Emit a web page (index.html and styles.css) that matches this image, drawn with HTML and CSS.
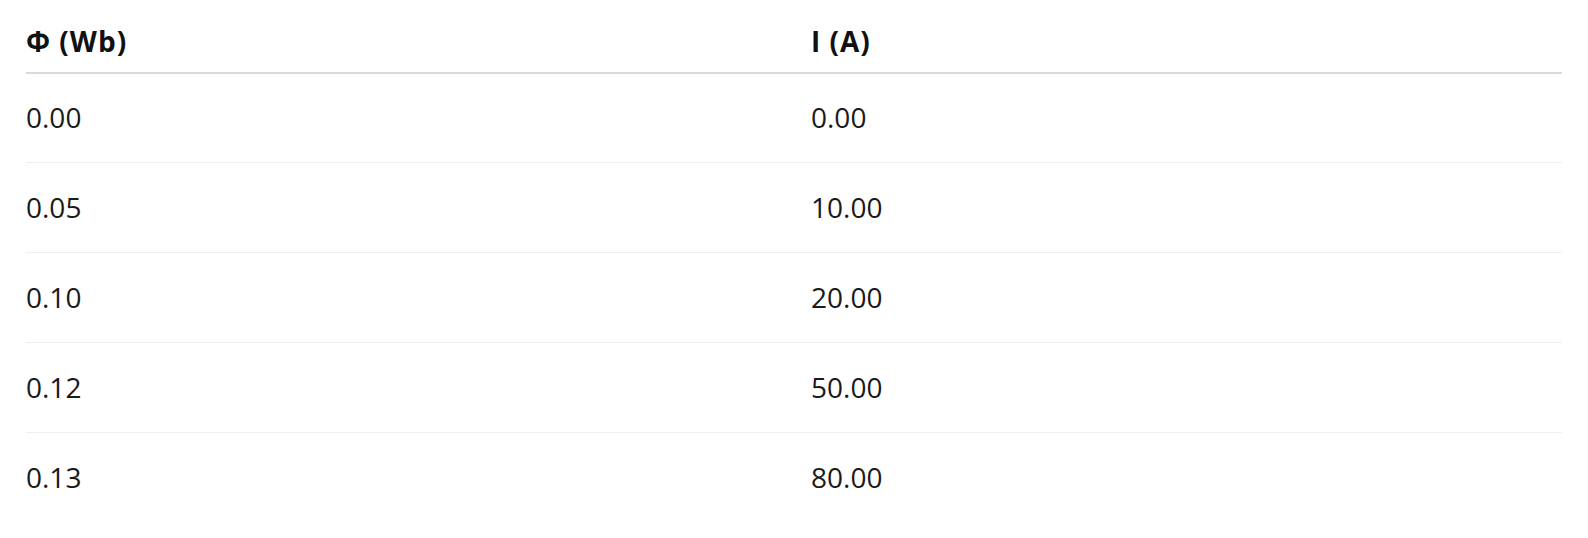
FILE: index.html
```html
<!DOCTYPE html>
<html lang="en">
<head>
<meta charset="utf-8">
<title>Flux vs Current</title>
<link rel="stylesheet" href="styles.css">
</head>
<body>
<div class="page">
  <table class="data-table">
    <colgroup><col class="col-half"><col class="col-half"></colgroup>
    <thead>
      <tr><th>Φ (Wb)</th><th>I (A)</th></tr>
    </thead>
    <tbody>
      <tr><td>0.00</td><td>0.00</td></tr>
      <tr><td>0.05</td><td>10.00</td></tr>
      <tr><td>0.10</td><td>20.00</td></tr>
      <tr><td>0.12</td><td>50.00</td></tr>
      <tr><td>0.13</td><td>80.00</td></tr>
    </tbody>
  </table>
</div>
</body>
</html>
```
FILE: styles.css
```css
html, body {
  margin: 0;
  padding: 0;
  background: #ffffff;
}
.page {
  padding: 8px 26px 0 26px;
  font-family: "Open Sans", "Noto Sans", "Liberation Sans", sans-serif;
  color: #1a1a1a;
}
.data-table {
  width: 100%;
  border-collapse: collapse;
  table-layout: fixed;
  font-size: 28px;
}
.col-half {
  width: 50%;
}
.data-table th,
.data-table td {
  box-sizing: border-box;
  text-align: left;
  padding: 24px 16px 24px 17px;
  line-height: 41px;
}
.data-table th {
  font-weight: 700;
  color: #111111;
  letter-spacing: 1px;
  padding-top: 13px;
  padding-bottom: 10px;
  border-bottom: 2px solid #d9d9d9;
}
.data-table td {
  font-weight: 400;
  border-bottom: 1px solid #efefef;
}
.data-table tbody tr:first-child td {
  padding-top: 23px;
}
.data-table th:first-child,
.data-table td:first-child {
  padding-left: 0;
}
.data-table tbody tr:last-child td {
  border-bottom: none;
}
```
